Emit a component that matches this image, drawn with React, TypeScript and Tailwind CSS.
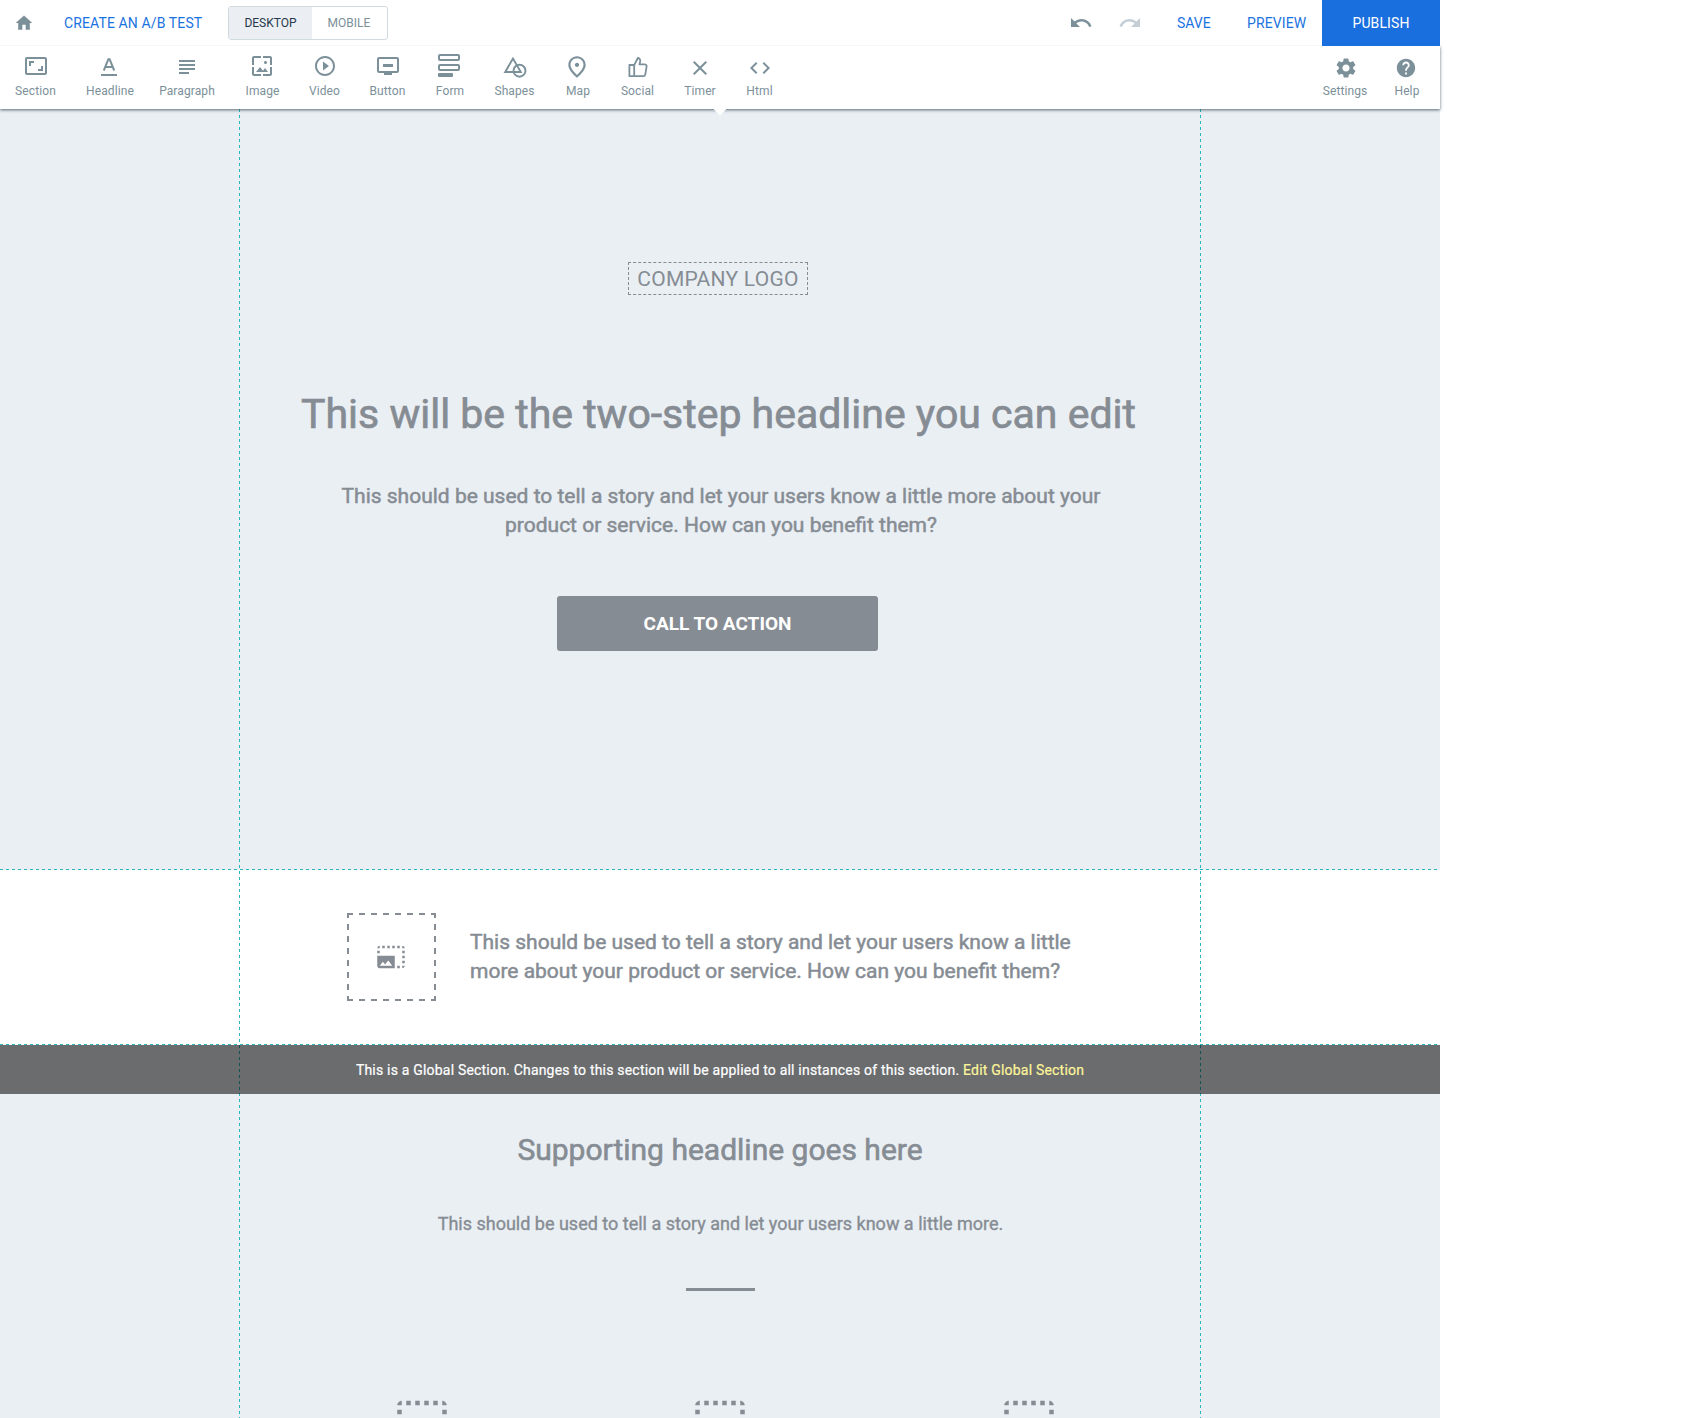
import type { ReactNode } from "react";
import {
  MdAspectRatio, MdClose, MdCode, MdHelp, MdHome, MdOutlinePlace,
  MdPhotoSizeSelectLarge, MdPlayCircleOutline, MdRedo, MdSettings, MdSubject, MdUndo, MdWallpaper,
} from "react-icons/md";

function HeadlineIcon() {
  return (
    <svg width="24" height="24" viewBox="0 0 24 24" fill="none" stroke="currentColor" strokeWidth="2">
      <path d="M6.8 16.5 L11.4 5.2 H12.6 L17.2 16.5 M8.4 13 H15.6" />
      <path d="M4 21 H20" />
    </svg>
  );
}

function ButtonIcon() {
  return (
    <svg width="24" height="24" viewBox="0 0 24 24" fill="none" stroke="currentColor" strokeWidth="2">
      <rect x="2" y="4" width="20" height="14" rx="1" />
      <path d="M7 11.5 H17" strokeWidth="3" />
      <path d="M8 20 H16" />
    </svg>
  );
}

function FormIcon() {
  return (
    <svg width="22" height="24" viewBox="0 0 22 24" fill="none" stroke="currentColor" strokeWidth="2">
      <rect x="1" y="1" width="20" height="5" rx="1" />
      <rect x="1" y="11" width="20" height="5" rx="1" />
      <rect x="0" y="19" width="15" height="4" rx="1" fill="currentColor" stroke="none" />
    </svg>
  );
}

function ShapesIcon() {
  return (
    <svg width="24" height="24" viewBox="0 0 24 24" fill="none" stroke="currentColor" strokeWidth="1.9">
      <path d="M10 3.6 L2.2 17 H17.8 Z" />
      <circle cx="16.5" cy="15.7" r="6" />
    </svg>
  );
}

function SocialIcon() {
  return (
    <svg width="20" height="22" viewBox="0 0 20 22" fill="none" stroke="currentColor" strokeWidth="1.8" strokeLinejoin="round">
      <path d="M1.4 9 H6.2 V20.2 H1.4 Z" />
      <path d="M6.2 9.2 L9.8 2 C11.6 2.4 12.6 3.6 12.2 5.4 L11.5 8.4 H16.6 C18 8.4 18.8 9.3 18.6 10.6 L17.3 18.4 C17.1 19.5 16.3 20.2 15.2 20.2 H6.2" />
    </svg>
  );
}

type Tool = { label: string; width: string; icon: ReactNode; shift: string };

const tools: Tool[] = [
  { label: "Section", width: "w-[71px]", shift: "left-0 top-0", icon: <MdAspectRatio size={24} /> },
  { label: "Headline", width: "w-[78px]", shift: "left-[-1px] top-0", icon: <HeadlineIcon /> },
  { label: "Paragraph", width: "w-[76px]", shift: "left-0 top-[1px]", icon: <MdSubject size={24} /> },
  { label: "Image", width: "w-[75px]", shift: "left-[-1px] top-0", icon: <MdWallpaper size={24} /> },
  { label: "Video", width: "w-[49px]", shift: "left-0 top-0", icon: <MdPlayCircleOutline size={24} /> },
  { label: "Button", width: "w-[77px]", shift: "left-0 top-0", icon: <ButtonIcon /> },
  { label: "Form", width: "w-[48px]", shift: "left-[-1px] top-0", icon: <FormIcon /> },
  { label: "Shapes", width: "w-[81px]", shift: "left-0 top-[1px]", icon: <ShapesIcon /> },
  { label: "Map", width: "w-[46px]", shift: "left-[-1px] top-[1px]", icon: <MdOutlinePlace size={26} /> },
  { label: "Social", width: "w-[73px]", shift: "left-0 top-[1px]", icon: <SocialIcon /> },
  { label: "Timer", width: "w-[52px]", shift: "left-0 top-[2px]", icon: <MdClose size={24} /> },
  { label: "Html", width: "w-[67px]", shift: "left-0 top-[2px]", icon: <MdCode size={24} /> },
];

function ToolItem({ label, width, icon, shift }: Tool) {
  return (
    <div className={`flex shrink-0 flex-col items-center ${width}`}>
      <div className={`relative mt-2 flex h-6 items-center ${shift}`}>{icon}</div>
      <div className="mt-[5px] text-[12px] leading-4 tracking-[0.1px] whitespace-nowrap">{label}</div>
    </div>
  );
}

function TopBar() {
  return (
    <div className="relative z-30 flex h-[46px] items-center bg-white text-[14px] text-[#1a73e0] shadow-[inset_0_-1px_0_#f4f6f7]">
      <MdHome size={20} className="ml-[14px] text-[#7c909a]" />
      <span className="ml-[30px] w-[138px] pt-px tracking-[0.12px] whitespace-nowrap">CREATE AN A/B TEST</span>
      <div className="ml-[26px] flex h-[34px] w-[160px] overflow-hidden rounded-[3px] border border-[#d0dae1] text-[12px]">
        <div className="flex w-[83px] items-center justify-center bg-[#ebeff3] text-[#27384c]">DESKTOP</div>
        <div className="flex flex-1 items-center justify-center pr-px text-[#7c909a]">MOBILE</div>
      </div>
      <MdUndo size={24} className="ml-auto text-[#7c909a]" />
      <MdRedo size={24} className="ml-[25px] text-[#c3ced7]" />
      <span className="ml-[35px] w-[34px] pt-px">SAVE</span>
      <span className="ml-[36px] w-[60px] pt-px tracking-[0.1px]">PREVIEW</span>
      <div className="ml-[15px] flex h-[46px] w-[118px] items-center justify-center bg-[#1a6fdf] pt-px text-white tracking-[0.1px]">
        PUBLISH
      </div>
    </div>
  );
}

function ToolBar() {
  return (
    <div className="relative z-20 flex h-[63px] bg-white text-[#7c909a] shadow-[0_1px_3px_rgba(40,60,75,0.75)]">
      {tools.map((t) => (
        <ToolItem key={t.label} {...t} />
      ))}
      <div className="ml-auto flex">
        <ToolItem label="Settings" width="w-[62px]" shift="left-[1px] top-[2px]" icon={<MdSettings size={24} />} />
        <ToolItem label="Help" width="w-[62px]" shift="left-[-1px] top-[2px]" icon={<MdHelp size={22} />} />
        <div className="w-[2px]" />
      </div>
      <svg className="absolute top-[63px] left-[714px]" width="12" height="7" viewBox="0 0 12 7">
        <path d="M0 0 H12 V0.5 L6 6.5 L0 0.5 Z" fill="#fff" />
      </svg>
    </div>
  );
}

function HorizontalGuide() {
  return (
    <div className="h-px w-full shrink-0 bg-[repeating-linear-gradient(90deg,#27b9bd_0_3px,transparent_3px_6px)]" />
  );
}

function VerticalGuide() {
  return <div className="h-full w-px bg-[repeating-linear-gradient(180deg,#27b9bd_0_3px,transparent_3px_6px)]" />;
}

export default function App() {
  return (
    <div className="h-[1418px] w-full overflow-hidden bg-white font-['Roboto',sans-serif]">
      <div className="relative flex h-full w-[1440px] flex-col">
        <header className="relative z-20 shrink-0 bg-white">
          <TopBar />
          <ToolBar />
        </header>

        <main className="relative flex flex-1 flex-col overflow-hidden text-[#868c93]">
          <div className="pointer-events-none absolute top-0 bottom-0 left-[239px] z-10 flex w-[962px] justify-between">
            <VerticalGuide />
            <VerticalGuide />
          </div>

          <section className="flex h-[761px] shrink-0 flex-col items-center bg-[#eaeff3]">
            <div className="mt-[153px] mr-[4px] flex h-[33px] w-[180px] items-center justify-center border border-dashed border-[#868c93] pt-[2px] text-[21px] tracking-[0.25px] whitespace-nowrap">
              COMPANY LOGO
            </div>
            <h1 className="mt-[94px] mr-[3px] text-[41px] leading-[50px] whitespace-nowrap [-webkit-text-stroke:0.7px]">
              This will be the two-step headline you can edit
            </h1>
            <p className="mt-[43px] ml-[2px] text-center text-[21px] leading-[29px] whitespace-nowrap [-webkit-text-stroke:0.5px]">
              This should be used to tell a story and let your users know a little more about your
              <br />
              product or service. How can you benefit them?
            </p>
            <button className="mt-[56px] mr-[5px] flex h-[55px] w-[321px] items-center justify-center rounded-[3px] bg-[#868c93] pt-[2px] text-[19px] font-bold text-white">
              CALL TO ACTION
            </button>
            <div className="mt-auto w-full">
              <HorizontalGuide />
            </div>
          </section>

          <section className="flex h-[175px] shrink-0 flex-col justify-between bg-white">
            <div className="flex items-start">
              <div className="mt-[43px] ml-[347px] flex h-[88px] w-[89px] items-center justify-center bg-[repeating-linear-gradient(90deg,#868c93_0_6px,transparent_6px_12px),repeating-linear-gradient(90deg,#868c93_0_6px,transparent_6px_12px),repeating-linear-gradient(180deg,#868c93_0_5px,transparent_5px_11px,#868c93_11px_12px),repeating-linear-gradient(180deg,#868c93_0_5px,transparent_5px_11px,#868c93_11px_12px)] bg-[size:100%_2px,100%_2px,2px_100%,2px_100%] bg-[position:top,bottom,left,right] bg-no-repeat">
                <MdPhotoSizeSelectLarge size={30} className="mr-[2px]" />
              </div>
              <p className="mt-[58px] ml-[34px] text-[21px] leading-[29px] whitespace-nowrap [-webkit-text-stroke:0.5px]">
                This should be used to tell a story and let your users know a little
                <br />
                more about your product or service. How can you benefit them?
              </p>
            </div>
            <HorizontalGuide />
          </section>

          <div className="flex flex-1 flex-col items-center bg-[#eaeff3]">
            <div className="relative z-20 flex h-[49px] w-full shrink-0 items-center justify-center bg-black/55 pt-[2px] text-[14px] tracking-[0.2px] text-white [-webkit-text-stroke:0.2px]">
              <span className="whitespace-nowrap">
                This is a Global Section. Changes to this section will be applied to all instances of this section.{" "}
                <a className="text-[#fdf59a]">Edit Global Section</a>
              </span>
            </div>
            <h2 className="mt-[38px] text-[30px] leading-[36px] whitespace-nowrap [-webkit-text-stroke:0.6px]">
              Supporting headline goes here
            </h2>
            <p className="mt-[44px] ml-px text-[18px] leading-[24px] whitespace-nowrap [-webkit-text-stroke:0.35px]">
              This should be used to tell a story and let your users know a little more.
            </p>
            <div className="mt-[52px] h-[3px] w-[69px] shrink-0 bg-[#868c93]" />
            <div className="mt-[103px] flex w-full">
              <MdPhotoSizeSelectLarge size={54} className="ml-[395px] shrink-0" />
              <MdPhotoSizeSelectLarge size={54} className="ml-[244px] shrink-0" />
              <MdPhotoSizeSelectLarge size={54} className="ml-[255px] shrink-0" />
            </div>
          </div>
        </main>
      </div>
    </div>
  );
}
